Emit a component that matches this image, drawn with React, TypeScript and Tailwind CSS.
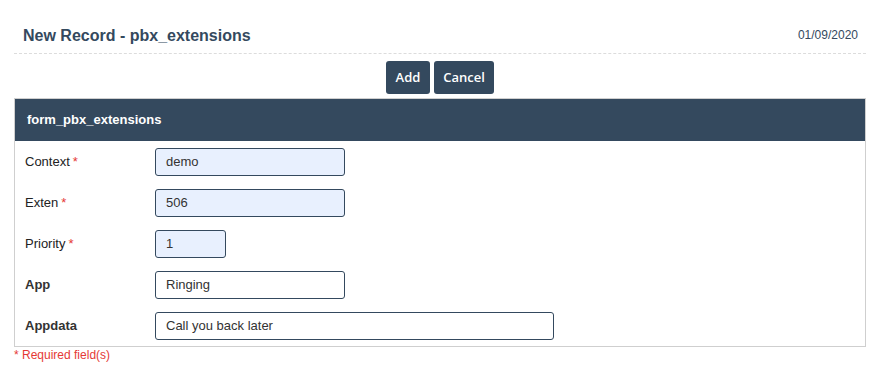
import React from "react";

const fields = [
  { label: "Context", value: "demo", required: true, width: "w-[190px]" },
  { label: "Exten", value: "506", required: true, width: "w-[190px]" },
  { label: "Priority", value: "1", required: true, width: "w-[71px]" },
  { label: "App", value: "Ringing", required: false, width: "w-[190px]" },
  { label: "Appdata", value: "Call you back later", required: false, width: "w-[399px]" },
];

const App = () => {
  return (
    <div className="min-h-[371px] bg-white pl-[14px] pr-[9px] font-['Liberation_Sans',Arial,sans-serif] text-[#333]">
      <div className="h-[54px] flex items-end justify-between border-b border-dashed border-[#dcdcdc] pb-[8px]">
        <h1 className="pl-[9px] text-[16px] leading-[18px] font-bold text-[#34495e]">
          New Record - pbx_extensions
        </h1>
        <span className="pr-[8px] pb-[3px] text-[12px] leading-[14px] text-[#34495e]">01/09/2020</span>
      </div>

      <div className="flex justify-center gap-[4px] mt-[7px]">
        <button className="h-[33px] w-[44px] rounded-[3px] bg-[#34495e] text-white text-[13px] font-semibold font-['Open_Sans',sans-serif]">
          Add
        </button>
        <button className="h-[33px] w-[60px] rounded-[3px] bg-[#34495e] text-white text-[13px] font-semibold font-['Open_Sans',sans-serif]">
          Cancel
        </button>
      </div>

      <div className="mt-[4px] border border-[#cfcfcf]">
        <div className="h-[42px] bg-[#34495e] flex items-center pl-[12px] text-white text-[13px] font-bold">
          form_pbx_extensions
        </div>
        {fields.map((f) => (
          <div key={f.label} className="h-[41px] flex items-center pl-[10px]">
            <div className={`w-[130px] text-[13px] ${f.required ? "font-normal text-[#222]" : "font-bold"}`}>
              {f.label}
              {f.required && <span className="text-[#e53935] ml-[3px]">*</span>}
            </div>
            <div
              className={`${f.width} h-[28px] flex items-center pl-[10px] rounded-[3px] border border-[#34495e] text-[13px] ${
                f.required ? "bg-[#e8f0fe]" : "bg-white"
              }`}
            >
              {f.value}
            </div>
          </div>
        ))}
      </div>

      <p className="mt-[1px] text-[12px] leading-[14px] text-[#e53935]">* Required field(s)</p>
    </div>
  );
};

export default App;
